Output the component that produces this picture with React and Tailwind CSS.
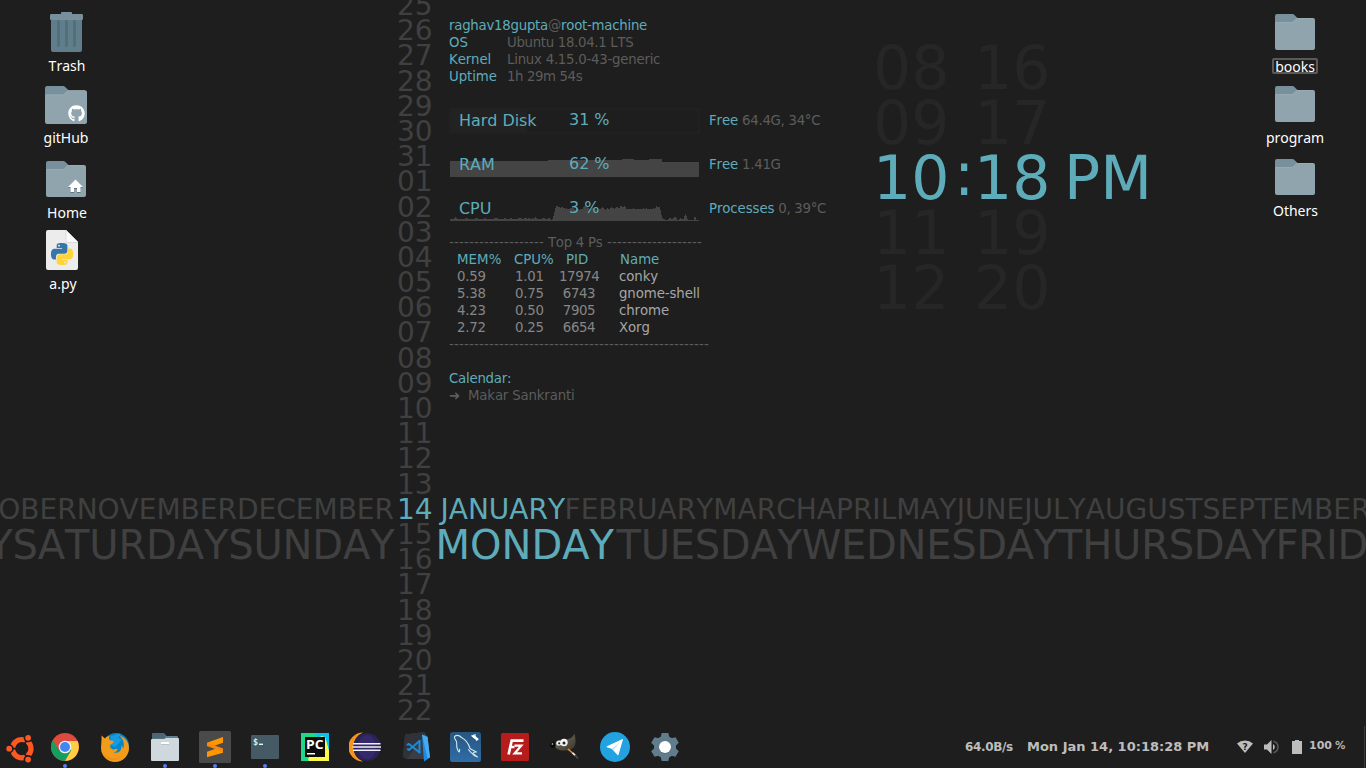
import React from "react";
import { FaGithub } from "react-icons/fa";

const DAYS = [
  "25", "26", "27", "28", "29", "30", "31",
  "01", "02", "03", "04", "05", "06", "07", "08", "09", "10", "11", "12", "13",
  "14", "15", "16", "17", "18", "19", "20", "21", "22",
];

const PROCESSES = [
  { mem: "0.59", cpu: "1.01", pid: "17974", name: "conky" },
  { mem: "5.38", cpu: "0.75", pid: "6743", name: "gnome-shell" },
  { mem: "4.23", cpu: "0.50", pid: "7905", name: "chrome" },
  { mem: "2.72", cpu: "0.25", pid: "6654", name: "Xorg" },
];

/* ---------- desktop icons ---------- */

function Folder({ w, h, children }) {
  return (
    <svg width={w} height={h} viewBox="0 0 40 36" preserveAspectRatio="none">
      <path d="M0 2a2 2 0 0 1 2-2h15.5a2 2 0 0 1 1.4.6L22.5 4v8H0z" fill="#78909c" />
      <path d="M0 9.5A1.5 1.5 0 0 1 1.5 8H17a2 2 0 0 0 1.4-.6l2.7-2.8A2 2 0 0 1 22.5 4H38a2 2 0 0 1 2 2v28a2 2 0 0 1-2 2H2a2 2 0 0 1-2-2z" fill="#90a4ae" />
      <path d="M.5 8.500H17a2 2 0 0 0 1.6-.7l2.700-2.700a2 2 0 0 1 1.400-.6H38" fill="none" stroke="#9cafb8" strokeWidth=".7" />
      {children}
    </svg>
  );
}

function Trash() {
  return (
    <svg width="33" height="40" viewBox="0 0 33 40">
      <rect x="11" y="0" width="11" height="4" rx="1" fill="#78909c" />
      <path d="M1 7h31v31a2 2 0 0 1-2 2H3a2 2 0 0 1-2-2z" fill="#607d8b" />
      <rect x="0" y="2" width="33" height="6" rx="1.2" fill="#78909c" />
      <path d="M8.500 9.500v24M16.500 9.500v24M24.500 9.500v24" stroke="#546e7a" strokeWidth="3" strokeLinecap="round" />
    </svg>
  );
}

function GithubFolder() {
  return (
    <div className="grid">
      <div className="[grid-area:1/1]"><Folder w={42} h={38} /></div>
      <div className="[grid-area:1/1] self-end justify-self-end pr-[2px] pb-[2px]">
        <FaGithub size={17} color="#ffffff" />
      </div>
    </div>
  );
}

function HomeFolder() {
  return (
    <Folder w={40} h={36}>
      <path d="M29.500 19.500 37 27h-2.500v5h-3.500v-4h-3v4h-3.500v-5H22z" fill="#5f7681" />
      <path d="M29.500 18.500 37 26h-2.500v5h-3.500v-4h-3v4h-3.500v-5H22z" fill="#fff" />
    </Folder>
  );
}

function PythonFile() {
  return (
    <svg width="32" height="40" viewBox="0 0 32 40">
      <path d="M2 0h18l12 12v26a2 2 0 0 1-2 2H2a2 2 0 0 1-2-2V2a2 2 0 0 1 2-2z" fill="#ececec" />
      <path d="M20 0v10a2 2 0 0 0 2 2h10z" fill="#fafafa" />
      <path d="M20 .500v10a2 2 0 0 0 2 2h10" fill="none" stroke="#d2d2d2" strokeWidth=".7" />
      <g transform="translate(5 13) scale(.92)">
        <path fill="#3776ab" d="M14.25.18l.9.2.73.26.59.3.45.32.34.34.25.34.16.33.1.3.04.26.02.2-.01.13V8.5l-.05.63-.13.55-.21.46-.26.38-.3.31-.33.25-.35.19-.35.14-.33.1-.3.07-.26.04-.21.02H8.77l-.69.05-.59.14-.5.22-.41.27-.33.32-.27.35-.2.36-.15.37-.1.35-.07.32-.04.27-.02.21v3.06H3.17l-.21-.03-.28-.07-.32-.12-.35-.18-.36-.26-.36-.36-.35-.46-.32-.59-.28-.73-.21-.88-.14-1.05-.05-1.23.06-1.22.16-1.04.24-.87.32-.71.36-.57.4-.44.42-.33.42-.24.4-.16.36-.1.32-.05.24-.01h.16l.06.01h8.16v-.83H6.18l-.01-2.75-.02-.37.05-.34.11-.31.17-.28.25-.26.31-.23.38-.2.44-.18.51-.15.58-.12.64-.1.71-.06.77-.04.84-.02 1.27.05zm-6.3 1.98l-.23.33-.08.41.08.41.23.34.33.22.41.09.41-.09.33-.22.23-.34.08-.41-.08-.41-.23-.33-.33-.22-.41-.09-.41.09z" />
        <path fill="#ffd43b" d="M21.04 6.11l.28.06.32.12.35.18.36.27.36.35.35.47.32.59.28.73.21.88.14 1.04.05 1.23-.06 1.23-.16 1.04-.24.86-.32.71-.36.57-.4.45-.42.33-.42.24-.4.16-.36.09-.32.05-.24.02-.16-.01h-8.22v.82h5.84l.01 2.76.02.36-.05.34-.11.31-.17.29-.25.25-.31.24-.38.2-.44.17-.51.15-.58.13-.64.09-.71.07-.77.04-.84.01-1.27-.04-1.07-.14-.9-.2-.73-.25-.59-.3-.45-.33-.34-.34-.25-.34-.16-.33-.1-.3-.04-.25-.02-.2.01-.13v-5.34l.05-.64.13-.54.21-.46.26-.38.3-.32.33-.24.35-.2.35-.14.33-.1.3-.06.26-.04.21-.02.13-.01h5.84l.69-.05.59-.14.5-.21.41-.28.33-.32.27-.35.2-.36.15-.36.1-.35.07-.32.04-.28.02-.21V6.07h2.09l.14.01zm-6.47 14.25l-.23.33-.08.41.08.41.23.33.33.23.41.08.41-.08.33-.23.23-.33.08-.41-.08-.41-.23-.33-.33-.23-.41-.08-.41.08z" />
      </g>
    </svg>
  );
}

function DesktopIcon({ label, className, labelClass = "", selected, children }) {
  return (
    <div className={`flex flex-col items-center justify-between w-20 ${className}`}>
      {children}
      <span
        className={
          selected
            ? "flex items-center justify-center w-[46px] h-4 rounded-[2px] outline-2 -outline-offset-2 outline-[#5c5a58] text-[14px] leading-[16px] pt-px mb-px"
            : `text-[14px] leading-[18px] ${labelClass}`
        }
      >
        {label}
      </span>
    </div>
  );
}

/* ---------- conky panel ---------- */

const C = "text-[#5eacba]";

function Info({ label, value, ls }) {
  return (
    <div className="flex h-[17px]">
      <span className={`w-[58px] tracking-[-0.1px] ${C}`}>{label}</span>
      <span className={ls}>{value}</span>
    </div>
  );
}

function Meter({ label, pct, graph, children }) {
  return (
    <div className="flex h-[44px]">
      <div className="grid w-[260px] h-[44px]">
        <div className="[grid-area:1/1]">{graph}</div>
        <div className={`[grid-area:1/1] flex pl-[10px] text-[16px] leading-[20px] tracking-[-0.05px] ${C}`}>
          <span className="w-[110px] pt-[3px]">{label}</span>
          <span className="pt-[2px]">{pct}</span>
        </div>
      </div>
      <div className="pt-[4px]">{children}</div>
    </div>
  );
}

const CPU = [
  2, 2, 2, 2, 3, 4, 3, 2, 2, 2, 2, 2, 2, 2, 2, 3, 3, 3, 2, 2, 2, 2, 2, 2, 2, 3, 3, 3, 2, 2, 2, 2, 2, 2, 3, 3,
  2, 2, 2, 2, 2, 2, 2, 2, 3, 3, 3, 3, 2, 2, 2, 2, 2, 2, 3, 3, 2, 2, 2, 2, 3, 3, 2, 2, 2, 2, 2, 2, 3, 3, 3, 3,
  2, 2, 3, 3, 3, 2, 3, 3, 2, 2, 3, 2, 3, 4, 3, 2, 2, 2, 2, 2, 3, 3, 3, 2, 2, 2, 3, 3, 2, 1, 2, 5, 9, 13, 15, 15,
  14, 14, 13, 14, 14, 13, 13, 12, 13, 12, 12, 12, 13, 13, 14, 13, 12, 11, 12, 12, 12, 11, 12, 12, 12, 14, 15,
  15, 14, 14, 13, 12, 12, 12, 13, 13, 12, 12, 11, 12, 11, 12, 12, 13, 14, 13, 12, 11, 12, 13, 12, 12, 13, 14,
  13, 13, 12, 13, 14, 14, 13, 14, 13,
];
const CPU_PLATEAU = [
  13, 15, 15, 14, 14, 15, 14, 12, 12, 12, 12, 12, 12, 12, 13, 12, 12, 12, 12, 12, 12, 12, 12, 12, 13, 12, 12, 13,
  12, 12, 12, 12, 12, 12, 13, 12, 13, 15, 14, 14, 14, 11,
];
const CPU_TAIL = [
  6, 3, 2, 2, 1, 1, 1, 2, 3, 3, 2, 2, 3, 4, 4, 3, 1, 1, 2, 3, 2, 2, 2, 5, 7, 5, 2, 1, 1, 1, 1, 1, 1, 4, 4, 1, 1, 1,
];

function CpuGraph() {
  const lead = CPU.slice(0, 249 - CPU_PLATEAU.length - CPU_TAIL.length);
  const bars = [...lead, ...CPU_PLATEAU, ...CPU_TAIL];
  return (
    <svg width="249" height="18" className="mt-[9px] ml-px" shapeRendering="crispEdges">
      {bars.map((h, i) => (
        <rect key={i} x={i} y={18 - h} width="1" height={h} fill="#444" />
      ))}
    </svg>
  );
}

function RamGraph() {
  return (
    <svg width="249" height="18" className="mt-[9px] ml-px" shapeRendering="crispEdges">
      <path d="M0 18V2H98V1H172V0H184V1H199V0H212V3H249V18z" fill="#444" />
    </svg>
  );
}

function DiskBar() {
  return (
    <div className="w-[251px] h-[26px] border-2 border-[#212121]">
      <div className="w-[76px] h-full bg-[#222222]" />
    </div>
  );
}

function Conky() {
  return (
    <div className="w-[400px] pl-[449px] box-content pt-[17px] text-[13.333px] leading-[17px] text-[#5c5c5c]">
      <div className={`h-[17px] tracking-[-0.26px] ${C}`}>
        raghav18gupta<span className="text-[#5c5c5c]">@</span>root-machine
      </div>
      <Info label="OS" value="Ubuntu 18.04.1 LTS" ls="tracking-[-0.32px]" />
      <Info label="Kernel" value="Linux 4.15.0-43-generic" ls="tracking-[-0.25px]" />
      <Info label="Uptime" value="1h 29m 54s" ls="tracking-[-0.4px]" />

      <div className="pt-[23px]">
        <Meter label="Hard Disk" pct="31 %" graph={<DiskBar />}>
          <span className={`tracking-[-0.1px] ${C}`}>Free</span>
          <span className="tracking-[-0.3px]"> 64.4G, 34°C</span>
        </Meter>
        <Meter label="RAM" pct="62 %" graph={<div className="-mt-[2px]"><RamGraph /></div>}>
          <span className={`tracking-[-0.1px] ${C}`}>Free</span>
          <span className="tracking-[-0.3px]"> 1.41G</span>
        </Meter>
        <Meter label="CPU" pct="3 %" graph={<div className="-mt-[2px]"><CpuGraph /></div>}>
          <span className={`tracking-[-0.1px] ${C}`}>Processes</span>
          <span className="tracking-[-0.3px]"> 0, 39°C</span>
        </Meter>
      </div>

      <div className="-mt-[6px] h-[17px] flex">
        <span className="w-[99px] tracking-[0.19px]">-------------------</span>
        <span className="w-[59px] tracking-[-0.3px]">Top 4 Ps</span>
        <span className="tracking-[0.19px]">-------------------</span>
      </div>
      <div className={`flex h-[17px] pl-[8px] ${C}`}>
        <span className="w-[57px] tracking-[0.1px]">MEM%</span>
        <span className="w-[52px]">CPU%</span>
        <span className="w-[54px]">PID</span>
        <span>Name</span>
      </div>
      {PROCESSES.map((p) => (
        <div key={p.pid} className="flex h-[17px] pl-[8px] text-[#868686]">
          <span className="w-[58px] tracking-[-0.2px]">{p.mem}</span>
          <span className="w-[44px] tracking-[-0.2px]">{p.cpu}</span>
          <span className="w-[40px] text-center tracking-[-0.4px]">{p.pid}</span>
          <span className="pl-[20px] tracking-[-0.1px] text-[#a6a6a6]">{p.name}</span>
        </div>
      ))}
      <div className="h-[17px] tracking-[0.19px]">----------------------------------------------------</div>
      <div className={`mt-[17px] h-[17px] tracking-[-0.25px] ${C}`}>Calendar:</div>
      <div className="h-[17px] flex">
        <span className="w-[19px]">➜</span>
        <span className="tracking-[-0.17px]">Makar Sankranti</span>
      </div>
    </div>
  );
}

function Clock() {
  const rows = [
    ["08", "16"],
    ["09", "17"],
    ["10", "18"],
    ["11", "19"],
    ["12", "20"],
  ];
  return (
    <div className="flex flex-col pl-[873px] pt-[41px] text-[60px] leading-[55px]">
      {rows.map(([h, m]) => {
        const now = h === "10";
        return (
          <div key={h} className={`flex h-[55px] ${now ? "text-[#5eacba]" : "text-[#262626]"}`}>
            <span className="w-[81px]">{h}</span>
            <span className="w-[20px] -mt-[4px]">{now ? ":" : ""}</span>
            <span className="w-[90px]">{m}</span>
            {now && <span>PM</span>}
          </div>
        );
      })}
    </div>
  );
}

/* ---------- taskbar icons ---------- */

const Ubuntu = () => (
  <svg width="29" height="30" viewBox="0 0 29 30">
    <circle cx="15.800" cy="14.700" r="9.200" fill="none" stroke="#ff5722" strokeWidth="5.200" />
    <path d="M15.800 14.700H2M15.800 14.700 22.300 3.400M15.800 14.700 22.300 26" stroke="#1e1e1e" strokeWidth="1.800" />
    <g fill="#ff5722" stroke="#1e1e1e" strokeWidth="1.600">
      <circle cx="3.200" cy="14.700" r="3.700" />
      <circle cx="22.100" cy="3.800" r="3.700" />
      <circle cx="22.100" cy="25.600" r="3.700" />
    </g>
  </svg>
);

const Chrome = () => (
  <svg width="28" height="28" viewBox="0 0 28 28">
    <circle cx="14" cy="14" r="14" fill="#dd4b3e" />
    <path d="M1.900 7A14 14 0 0 0 14 28l6.100-10.500L14 14 7.900 17.500z" fill="#12a05c" />
    <path d="M14 28A14 14 0 0 0 26.500 8H14l6.100 9.500z" fill="#ffce43" />
    <circle cx="14" cy="14" r="6.300" fill="#f1f1f1" />
    <circle cx="14" cy="14" r="5" fill="#4285f4" />
  </svg>
);

const Firefox = () => (
  <svg width="30" height="30" viewBox="0 0 30 30">
    <circle cx="16" cy="14" r="13" fill="#0288d1" />
    <path d="M11 4c4 0 6-3 10-2l-3 4 4 1-3 4-4 4-5-2z" fill="#1a9be0" />
    <path d="M1.500 3.500 5 6.500C6 5 7.500 4.200 9.500 4c-.7 1.300-.6 3 .3 4.300l3.700.7c.3 1.500-1 2.500-3 3.500-1 2.300.2 4.500 3 5 1.500.2 2.500-.8 4-.6-.3 2.200-2 3.400-4 3.600 5 1.500 8.500-2 8-7 1.200 1 1.500 2.200 1.500 3.500 2-4.500.5-10-3.500-13.500 6 2 9.500 7 9.500 12.500a14 14 0 0 1-28 0c0-3 .8-8 .5-12.500z" fill="#f39c1a" />
    <path d="M2 19c3 7 12 10 20 5-5 6-17 6-20-5z" fill="#e67e0c" opacity=".4" />
  </svg>
);

const Files = () => (
  <svg width="28" height="28" viewBox="0 0 28 28">
    <path d="M1 1.500A1.500 1.500 0 0 1 2.500 0H12a2 2 0 0 1 1.500.7L15.500 3H26a1 1 0 0 1 1 1v6H1z" fill="#5f7f8c" />
    <path d="M1 1.500A1.500 1.500 0 0 1 2.500 0H12l3 3-2 2.500H1z" fill="#4b6674" />
    <path d="M0 7a1 1 0 0 1 1-1h12.500L15 5h12a1 1 0 0 1 1 1v21a1 1 0 0 1-1 1H1a1 1 0 0 1-1-1z" fill="#cfd8dc" />
    <rect x="10" y="9" width="8" height="2" rx=".5" fill="#fff" />
    <rect x="10" y="11" width="8" height=".8" fill="#b4bec3" />
  </svg>
);

const Sublime = () => (
  <svg width="32" height="32" viewBox="0 0 32 32">
    <rect width="32" height="32" rx="1.500" fill="#4a4a4a" />
    <path d="M8 11.800 24 6v5.700l-8.600 3.100 8.600 2.700v4.300L8 26.200v-5.500l8.600-3L8 15z" fill="#ff9800" />
    <path d="M8 11.800v3.200l16 6.300v-3.800z" fill="#f57f17" opacity=".65" />
  </svg>
);

const Terminal = () => (
  <svg width="28" height="24" viewBox="0 0 28 24">
    <rect width="28" height="24" rx="1.200" fill="#455a64" />
    <text x="2" y="9.500" fontFamily="DejaVu Sans Mono, monospace" fontSize="8.500" fontWeight="700" fill="#c9f0f0">$</text>
    <rect x="8" y="8.600" width="4" height="1.400" fill="#d5ffff" />
  </svg>
);

const PyCharm = () => (
  <svg width="28" height="28" viewBox="0 0 28 28">
    <rect width="28" height="28" fill="#21d789" />
    <path d="M14 0h14v18L20 9z" fill="#07c3f2" />
    <path d="M6 28 20 3l4 1 4 13v11z" fill="#fcf84a" />
    <path d="M24 0h4v17z" fill="#07c3f2" />
    <path d="M0 28h8L3 20z" fill="#21d789" />
    <rect x="4" y="4" width="20" height="20" fill="#0c0c0c" />
    <text x="5" y="15.500" fontFamily="Open Sans, sans-serif" fontSize="12.500" fontWeight="700" fill="#fff" textLength="17.500" lengthAdjust="spacingAndGlyphs">PC</text>
    <rect x="6" y="20" width="8" height="1.500" fill="#fff" />
  </svg>
);

const Eclipse = () => (
  <svg width="32" height="30" viewBox="0 0 32 30">
    <path d="M14 .400A14.600 14.600 0 0 0 14 29.600 16 16 0 0 1 14 .400z" fill="#f7941e" />
    <ellipse cx="18" cy="15" rx="13.700" ry="14" fill="#2c2255" />
    <ellipse cx="18" cy="15" rx="9" ry="12" fill="#3a2f78" opacity=".6" />
    <path d="M4 11.800h27.500M3.500 15h28.500M4 18.200h27.500" stroke="#f2f0fa" strokeWidth="1.500" />
  </svg>
);

const VsCode = () => (
  <svg width="28" height="30" viewBox="0 0 28 30">
    <path d="M2 2.500 21 0l4 5-3 22-18 0-4-2z" fill="#3b3d43" />
    <path d="M2 2.500 21 0v3L4 27l-4-2z" fill="#30323a" />
    <path d="M19 2.500 24.500 5l2.500 20.500-6 4z" fill="#1b8ae0" />
    <path d="M19 2.500 24.500 5l2.500 20.500-2.500 1z" fill="#45aaf2" />
    <path d="M16.500 9 6 18l-1.200-.8M4.500 12.700l1.500-.7 10.500 8.500" fill="none" stroke="#1e88d8" strokeWidth="2" strokeLinejoin="round" strokeLinecap="round" />
    <path d="M16.500 8.500v12.500" stroke="#1e88d8" strokeWidth="2" />
  </svg>
);

const MySql = () => (
  <svg width="31" height="30" viewBox="0 0 31 30">
    <defs>
      <linearGradient id="mysql" x1="0" y1="0" x2="0" y2="1">
        <stop offset="0" stopColor="#27567f" />
        <stop offset="1" stopColor="#2f6da6" />
      </linearGradient>
    </defs>
    <rect width="31" height="30" rx="2.500" fill="url(#mysql)" />
    <path d="M4.500 4.500c2-1.500 5-1 7 1 4 2 7 6 8.500 11 2 1.500 4.500 2.500 6.500 3.500-2 0-3 .3-3.500 1 1 1.500 3 2.500 4.500 4-3-.8-5-2.500-6.500-4.500-1-1-1.500-2.500-3-3M4.500 4.500c-.5 1.500.5 2.500 1.500 4 1.500 2.500.3 4 .8 6.500.5 2 1.200 4.500 2.500 5 .5-1 0-2 .5-3" fill="none" stroke="#d5e4f0" strokeWidth="1.100" strokeLinejoin="round" />
    <path d="M22.500 3.500 27.500 7.500" stroke="#fff" strokeWidth="2.600" />
    <path d="M25 2v3M21.500 3.500l3 2M26 8.500l2.500-1.500" stroke="#fff" strokeWidth="1.100" />
  </svg>
);

const FileZilla = () => (
  <svg width="28" height="28" viewBox="0 0 28 28">
    <rect width="28" height="28" rx="1.500" fill="#b71c1c" />
    <g fill="none" stroke="#fff" strokeLinejoin="miter">
      <path d="M7.600 21.500 10.700 7.700H22.500M9 14h4.500" strokeWidth="2.700" />
      <path d="M13.500 12.700H20.200L13.700 20.300H21" strokeWidth="2.300" />
    </g>
  </svg>
);

const Gimp = () => (
  <svg width="30" height="26" viewBox="0 0 30 26">
    <defs>
      <linearGradient id="gimp" x1="0" y1="0" x2="1" y2="1">
        <stop offset="0" stopColor="#7b7462" />
        <stop offset="1" stopColor="#3a362c" />
      </linearGradient>
    </defs>
    <path d="M4 10c3-1 4-4 7-4 4-1 9 1 13.500-6 1 4 1.500 8 .5 11-1 4-6 6-11.500 5.500-4 0-7.500-1.500-8.500-4.500z" fill="url(#gimp)" />
    <circle cx="2.800" cy="11" r="2.800" fill="#0a0a0a" />
    <circle cx="2.400" cy="10" r=".9" fill="#9a9a9a" />
    <circle cx="8.800" cy="9" r="2.600" fill="#eee" />
    <circle cx="14" cy="8.500" r="3.700" fill="#f4f4f4" />
    <circle cx="9.200" cy="9.300" r="1.100" fill="#222" />
    <circle cx="14" cy="9" r="1.500" fill="#222" />
    <path d="M18 15l5 4.500" stroke="#e98b3a" strokeWidth="1.600" />
    <path d="M22.500 18.800l3 2.800" stroke="#e8e8e8" strokeWidth="1.800" />
    <path d="M25 21l3 3.500" stroke="#4a4a4a" strokeWidth="1.800" />
  </svg>
);

const Telegram = () => (
  <svg width="30" height="30" viewBox="0 0 30 30">
    <circle cx="15" cy="15" r="15" fill="#22a2e0" />
    <path d="M22.500 7 7 14.200c-.6.3-.5.8 0 1l5 1.700L17.500 23c.4.3.9.2 1-.3L23 7.500c.1-.4-.2-.6-.5-.5z" fill="#fff" />
    <path d="M12 16.900 20 10l-6.500 8z" fill="#c5dfee" />
  </svg>
);

const Settings = () => (
  <svg width="28" height="28" viewBox="0 0 28 28">
    <g fill="#607d8b">
      <circle cx="14" cy="14" r="11" />
      {[0, 60, 120].map((a) => (
        <path key={a} d="M10.700 0h6.600l1.200 5v18l-1.200 5h-6.600l-1.200-5V5z" transform={`rotate(${a} 14 14)`} />
      ))}
    </g>
    <circle cx="14" cy="14.600" r="6" fill="#4b626d" />
    <circle cx="14" cy="14" r="6" fill="#fff" />
  </svg>
);

const DOCK = [
  { id: "chrome", icon: <Chrome />, running: true },
  { id: "firefox", icon: <Firefox /> },
  { id: "files", icon: <Files />, running: true },
  { id: "sublime", icon: <Sublime />, running: true },
  { id: "terminal", icon: <Terminal />, running: true },
  { id: "pycharm", icon: <PyCharm /> },
  { id: "eclipse", icon: <Eclipse /> },
  { id: "vscode", icon: <div className="pl-[4px]"><VsCode /></div> },
  { id: "mysql", icon: <MySql /> },
  { id: "filezilla", icon: <FileZilla /> },
  { id: "gimp", icon: <Gimp /> },
  { id: "telegram", icon: <Telegram /> },
  { id: "settings", icon: <Settings /> },
];

function Taskbar() {
  return (
    <div className="flex h-[46px] w-full items-stretch">
      <div className="w-10 pl-[6px] pt-[12px]"><Ubuntu /></div>
      {DOCK.map((d) => (
        <div key={d.id} className="flex flex-col items-center w-[50px] overflow-hidden">
          <div className="flex h-[42px] mt-1 shrink-0 items-center justify-center">{d.icon}</div>
          {d.running && <div className="size-[4px] shrink-0 rounded-full bg-[#5b7cf7] -mt-[4px]" />}
        </div>
      ))}
      <div className="flex flex-1 items-start justify-end font-bold text-[#bdbdbd] pt-[15px]">
        <span className="w-[62px] text-[12px] leading-[20px] tracking-[-0.35px]">64.0B/s</span>
        <span className="w-[210px] text-[13px] leading-[20px]">Mon Jan 14, 10:18:28 PM</span>
        <svg width="16" height="13" viewBox="0 0 16 13" className="mt-[3px]">
          <path d="M0 3.500A12 12 0 0 1 16 3.500L8 13z" fill="#bdbdbd" />
          <text x="8" y="9.500" textAnchor="middle" fontFamily="DejaVu Sans, sans-serif" fontSize="9" fontWeight="700" fill="#1e1e1e">?</text>
        </svg>
        <svg width="16" height="14" viewBox="0 0 16 14" className="mt-[3px] ml-[11px]">
          <path d="M0 4.500h3L7.500 0v14L3 9.500H0z" fill="#bdbdbd" />
          <path d="M9 4a3.400 3.400 0 0 1 0 6z" fill="#bdbdbd" />
          <path d="M9.500 1.200a6 6 0 0 1 0 11.600" fill="none" stroke="#5a5a5a" strokeWidth="1.500" />
        </svg>
        <svg width="10" height="14" viewBox="0 0 10 14" className="mt-[3px] ml-[12px]">
          <path d="M0 1h3V0h4v1h3v13H0z" fill="#bdbdbd" />
        </svg>
        <span className="ml-[7px] w-[26px] text-[11px] leading-[17px]">100</span>
        <span className="w-[29px] text-[11px] leading-[17px] font-normal [-webkit-text-stroke:0.3px_#bdbdbd]">%</span>
        <div className="-mt-[11px] h-[42px] w-px mr-px bg-[#3c3c3c]" />
      </div>
    </div>
  );
}

/* ---------- page ---------- */

export default function App() {
  return (
    <div className="flex flex-col w-[1366px] h-[768px] overflow-hidden bg-[#1e1e1e] font-['DejaVu_Sans',sans-serif] [font-kerning:none] whitespace-nowrap">
      <div className="grid grid-cols-[1366px] h-[722px] overflow-hidden">
        <div className="[grid-area:1/1] h-[722px] overflow-hidden pl-[397px] text-[28px] text-[#404040]">
          <div className="-mt-[7px]">
            {DAYS.map((d) => (
              <div key={d} className={`h-[25.200px] leading-[25.200px] ${d === "14" ? "text-[#5eacba]" : ""}`}>
                {d}
              </div>
            ))}
          </div>
        </div>

        <div className="[grid-area:1/1] flex flex-col pt-[491px] text-[#404040]">
          <div className="flex h-[38px] text-[28px] leading-[38px] overflow-hidden">
            <div className="flex shrink-0 w-[394px] justify-end">OCTOBERNOVEMBERDECEMBER</div>
            <div className="shrink-0 w-[46.500px]" />
            <div className="shrink-0 w-[124px] text-[#5eacba]">JANUARY</div>
            <div className="shrink-0 tracking-[0.02px]">FEBRUARYMARCHAPRILMAYJUNEJULYAUGUSTSEPTEMBER</div>
          </div>
          <div className="flex h-[46px] -mt-[7px] text-[40px] leading-[46px] overflow-hidden">
            <div className="flex shrink-0 w-[394.500px] justify-end tracking-[-0.15px]">FRIDAYSATURDAYSUNDAY</div>
            <div className="shrink-0 w-[41px]" />
            <div className="shrink-0 w-[181px] text-[#5eacba]">MONDAY</div>
            <div className="shrink-0 tracking-[-0.26px]">TUESDAYWEDNESDAYTHURSDAYFRIDAY</div>
          </div>
        </div>

        <div className="[grid-area:1/1]"><Conky /></div>
        <div className="[grid-area:1/1]"><Clock /></div>

        <div className="[grid-area:1/1] flex justify-between pl-[26px] pr-[31px] pt-3 font-['Noto_Sans',sans-serif] text-white">
          <div className="flex flex-col">
            <DesktopIcon label="Trash" className="h-[63px]" labelClass="pl-[2px]"><Trash /></DesktopIcon>
            <DesktopIcon label="gitHub" className="mt-[11px] h-[61px]"><GithubFolder /></DesktopIcon>
            <DesktopIcon label="Home" className="mt-[14px] h-[61px]" labelClass="pl-[2px]"><HomeFolder /></DesktopIcon>
            <DesktopIcon label="a.py" className="mt-[8px] h-[63px] -ml-[4px]" labelClass="pl-[2px]"><PythonFile /></DesktopIcon>
          </div>
          <div className="flex flex-col pt-[2px]">
            <DesktopIcon label="books" selected className="h-[61px]"><Folder w={40} h={36} /></DesktopIcon>
            <DesktopIcon label="program" className="mt-[11px] h-[61px]"><Folder w={40} h={36} /></DesktopIcon>
            <DesktopIcon label="Others" className="mt-[12px] h-[61px]" labelClass="pl-[1px]"><Folder w={40} h={36} /></DesktopIcon>
          </div>
        </div>
      </div>
      <Taskbar />
    </div>
  );
}
